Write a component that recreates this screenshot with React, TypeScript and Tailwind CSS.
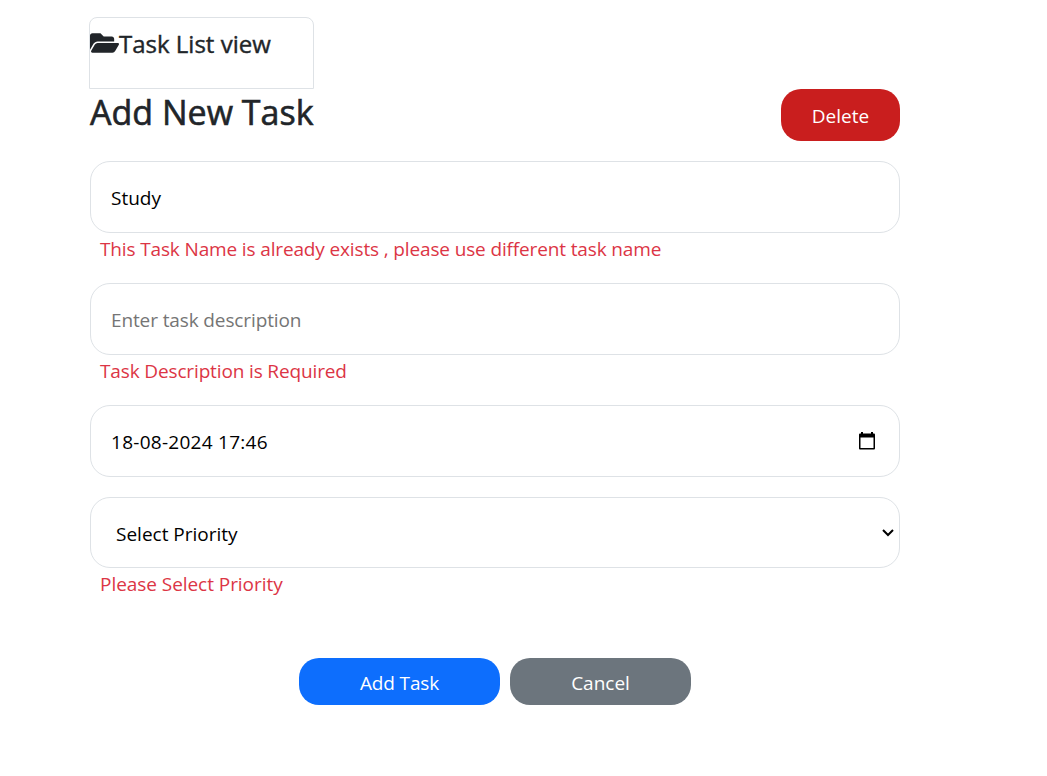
import { FaFolderOpen } from "react-icons/fa";

const field =
  "flex w-full items-center rounded-[20px] border border-[#dee2e6] bg-white pl-5 pt-0.5 text-[19px] leading-[30px] text-black";
const error =
  "h-[30px] pl-2.5 pt-px text-[19px] leading-[30px] tracking-[-0.14px] text-[#dc3545] whitespace-nowrap";

export default function App() {
  return (
    <main className="h-[776px] w-full bg-white pt-[17px] pl-[89px] font-['Open_Sans','Noto_Sans',sans-serif] text-[#212529]">
      <nav className="h-[72px] w-[225px] rounded-t-lg border border-[#dee2e6] pt-[11px]">
        <a className="flex items-center text-[24px] leading-[30px] font-medium whitespace-nowrap">
          <FaFolderOpen className="mb-0.5 h-[26px] w-[29px] shrink-0" />
          <span className="[-webkit-text-stroke:0.4px]">Task List view</span>
        </a>
      </nav>
      <section className="ml-px w-[810px]">
        <header className="flex h-[72px] items-start justify-between">
          <h1 className="pt-[2px] text-[34px] leading-[42px] font-medium whitespace-nowrap [-webkit-text-stroke:0.6px]">
            Add New Task
          </h1>
          <button className="h-[52px] w-[119px] rounded-[20px] bg-[#c91e1e] pt-0.5 text-[19px] text-white">
            Delete
          </button>
        </header>
        <div className={`${field} h-[72px]`}>
          <span>Study</span>
        </div>
        <p className={error}>
          <span>This Task Name is already exists , please use different task name</span>
        </p>
        <div className={`${field} mt-5 h-[72px]`}>
          <span className="tracking-[-0.12px] text-[#757575]">Enter task description</span>
        </div>
        <p className={error}>
          <span>Task Description is Required</span>
        </p>
        <div className={`${field} mt-5 h-[72px] justify-between pr-[23px]`}>
          <span className="tracking-[0.27px]">18-08-2024 17:46</span>
          <svg className="mb-0.5 h-[18px] w-[18px]" viewBox="0 0 18 18">
            <path
              fill="black"
              fillRule="evenodd"
              d="M3 0h2v1.5h8V0h2v1.5h.7c.8 0 1.3.5 1.3 1.3v13.4c0 .8-.5 1.3-1.3 1.3H2.3c-.8 0-1.3-.5-1.3-1.3V2.8c0-.8.5-1.3 1.3-1.3H3zM2.5 5.5V16h13V5.5z"
            />
          </svg>
        </div>
        <div className={`${field} mt-5 h-[71px] justify-between pr-[5px]`}>
          <span className="pl-[5px]">Select Priority</span>
          <svg className="mb-0.5 h-3 w-3" viewBox="0 0 12 12" fill="none" stroke="black" strokeWidth="2">
            <path d="M1 3l5 5 5-5" />
          </svg>
        </div>
        <p className={error}>
          <span className="tracking-[-0.05px]">Please Select Priority</span>
        </p>
        <footer className="mt-[60px] flex justify-center gap-2.5 text-[19px] text-white">
          <button className="h-[47px] w-[201px] rounded-[20px] bg-[#0d6efd] pt-1 tracking-[-0.14px]">Add Task</button>
          <button className="h-[47px] w-[181px] rounded-[20px] bg-[#6c757d] pt-1">Cancel</button>
        </footer>
      </section>
    </main>
  );
}
